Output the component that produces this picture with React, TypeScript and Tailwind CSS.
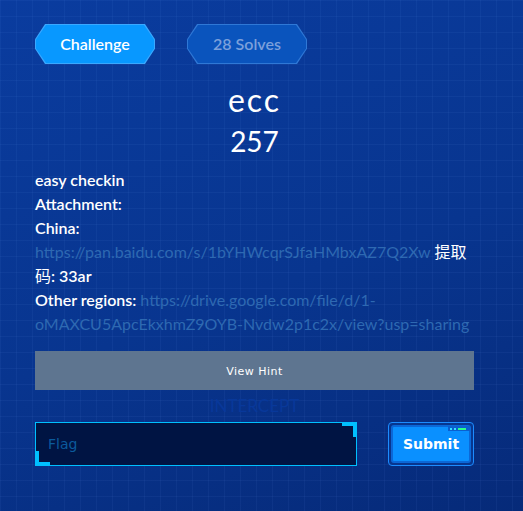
import React from 'react';

const hex =
  '[clip-path:polygon(10px_0,calc(100%-10px)_0,100%_38%,100%_62%,calc(100%-10px)_100%,10px_100%,0_62%,0_38%)]';

const Pill = ({
  label,
  outer,
  inner,
  text,
}: {
  label: string;
  outer: string;
  inner: string;
  text: string;
}) => (
  <div className={`h-[40px] w-[120px] p-[1px] ${hex} ${outer}`}>
    <div
      className={`flex h-full w-full items-center justify-center text-[16px] font-semibold ${hex} ${inner} ${text}`}
    >
      {label}
    </div>
  </div>
);

const App = () => {
  return (
    <div className="min-h-screen bg-[linear-gradient(160deg,#0a3c9f_0%,#08358f_55%,#062a79_100%)] font-['Lato','Noto_Sans_CJK_SC',sans-serif]">
      <div className="min-h-screen bg-[linear-gradient(rgba(120,170,255,0.06)_1px,transparent_1px),linear-gradient(90deg,rgba(120,170,255,0.06)_1px,transparent_1px)] bg-[size:16px_16px] pt-[24px] pr-[49px] pb-[44px] pl-[35px]">
        {/* tabs */}
        <div className="flex gap-[32px]">
          <Pill label="Challenge" outer="bg-[#3aa8ff]" inner="bg-[#0898ff]" text="text-white" />
          <Pill label="28 Solves" outer="bg-[#2f78d6]" inner="bg-[#0a54bd]" text="text-[#7ba0db]" />
        </div>

        {/* title */}
        <div className="mt-[16px] flex flex-col items-center text-white">
          <h1 className="text-[32px] leading-[40px] tracking-[2px]">ecc</h1>
          <div className="text-[28px] leading-[42px]">257</div>
        </div>

        {/* description */}
        <div className="mt-[6px] text-[16px] leading-[24px] font-semibold text-white">
          <p>easy checkin</p>
          <p>Attachment:</p>
          <p>China:</p>
          <p>
            <a className="font-normal text-[#2e69b2]">
              https://pan.baidu.com/s/1bYHWcqrSJfaHMbxAZ7Q2Xw
            </a>{' '}
            <span className="font-normal">提取码</span>: 33ar
          </p>
          <p>
            Other regions:{' '}
            <a className="font-normal text-[#2e69b2]">
              https://drive.google.com/file/d/1-oMAXCU5ApcEkxhmZ9OYB-Nvdw2p1c2x/view?usp=sharing
            </a>
          </p>
        </div>

        {/* hint */}
        <button className="mt-[15px] flex h-[39px] w-full items-center justify-center bg-[#5e7590] pt-[3px] font-['DejaVu_Sans',sans-serif] text-[11px] tracking-[0.5px] text-white">
          View Hint
        </button>

        <div className="flex h-[32px] items-center justify-center font-['Lato',sans-serif] text-[17px] text-[#08389a]">
          INTERCEPT
        </div>

        {/* flag form */}
        <div className="flex items-center justify-between">
          <div className="relative h-[44px] w-[322px] border border-[#00c0ff] bg-[#001443]">
            <input
              placeholder="Flag"
              className="h-full w-full bg-transparent pl-[12px] font-['DejaVu_Sans',sans-serif] text-[14px] text-white outline-none placeholder:text-[#0b5a9c]"
            />
            <span className="absolute top-0 right-0 h-[14px] w-[3px] bg-[#00c0ff]" />
            <span className="absolute top-0 right-0 h-[3px] w-[14px] bg-[#00c0ff]" />
            <span className="absolute bottom-0 left-0 h-[14px] w-[3px] bg-[#00c0ff]" />
            <span className="absolute bottom-0 left-0 h-[3px] w-[14px] bg-[#00c0ff]" />
          </div>

          <div className="relative h-[44px] w-[86px] rounded-[4px] border border-[#1c8cff] bg-[#07368f] p-[2px]">
            <button className="flex h-full w-full items-center justify-center rounded-[3px] border-2 border-[#0b68d8] bg-[#0a90ff] font-['DejaVu_Sans',sans-serif] text-[14px] font-bold text-white">
              Submit
            </button>
            <span className="absolute top-[3px] right-[3px] flex h-[5px] w-[22px] items-center gap-[2px] bg-[#0b5fcf] px-[2px]">
              <span className="h-[2px] w-[2px] bg-[#35e0ff]" />
              <span className="h-[2px] w-[2px] bg-[#35e0ff]" />
              <span className="h-[2px] w-[8px] bg-[#2dff8a]" />
            </span>
          </div>
        </div>
      </div>
    </div>
  );
};

export default App;
